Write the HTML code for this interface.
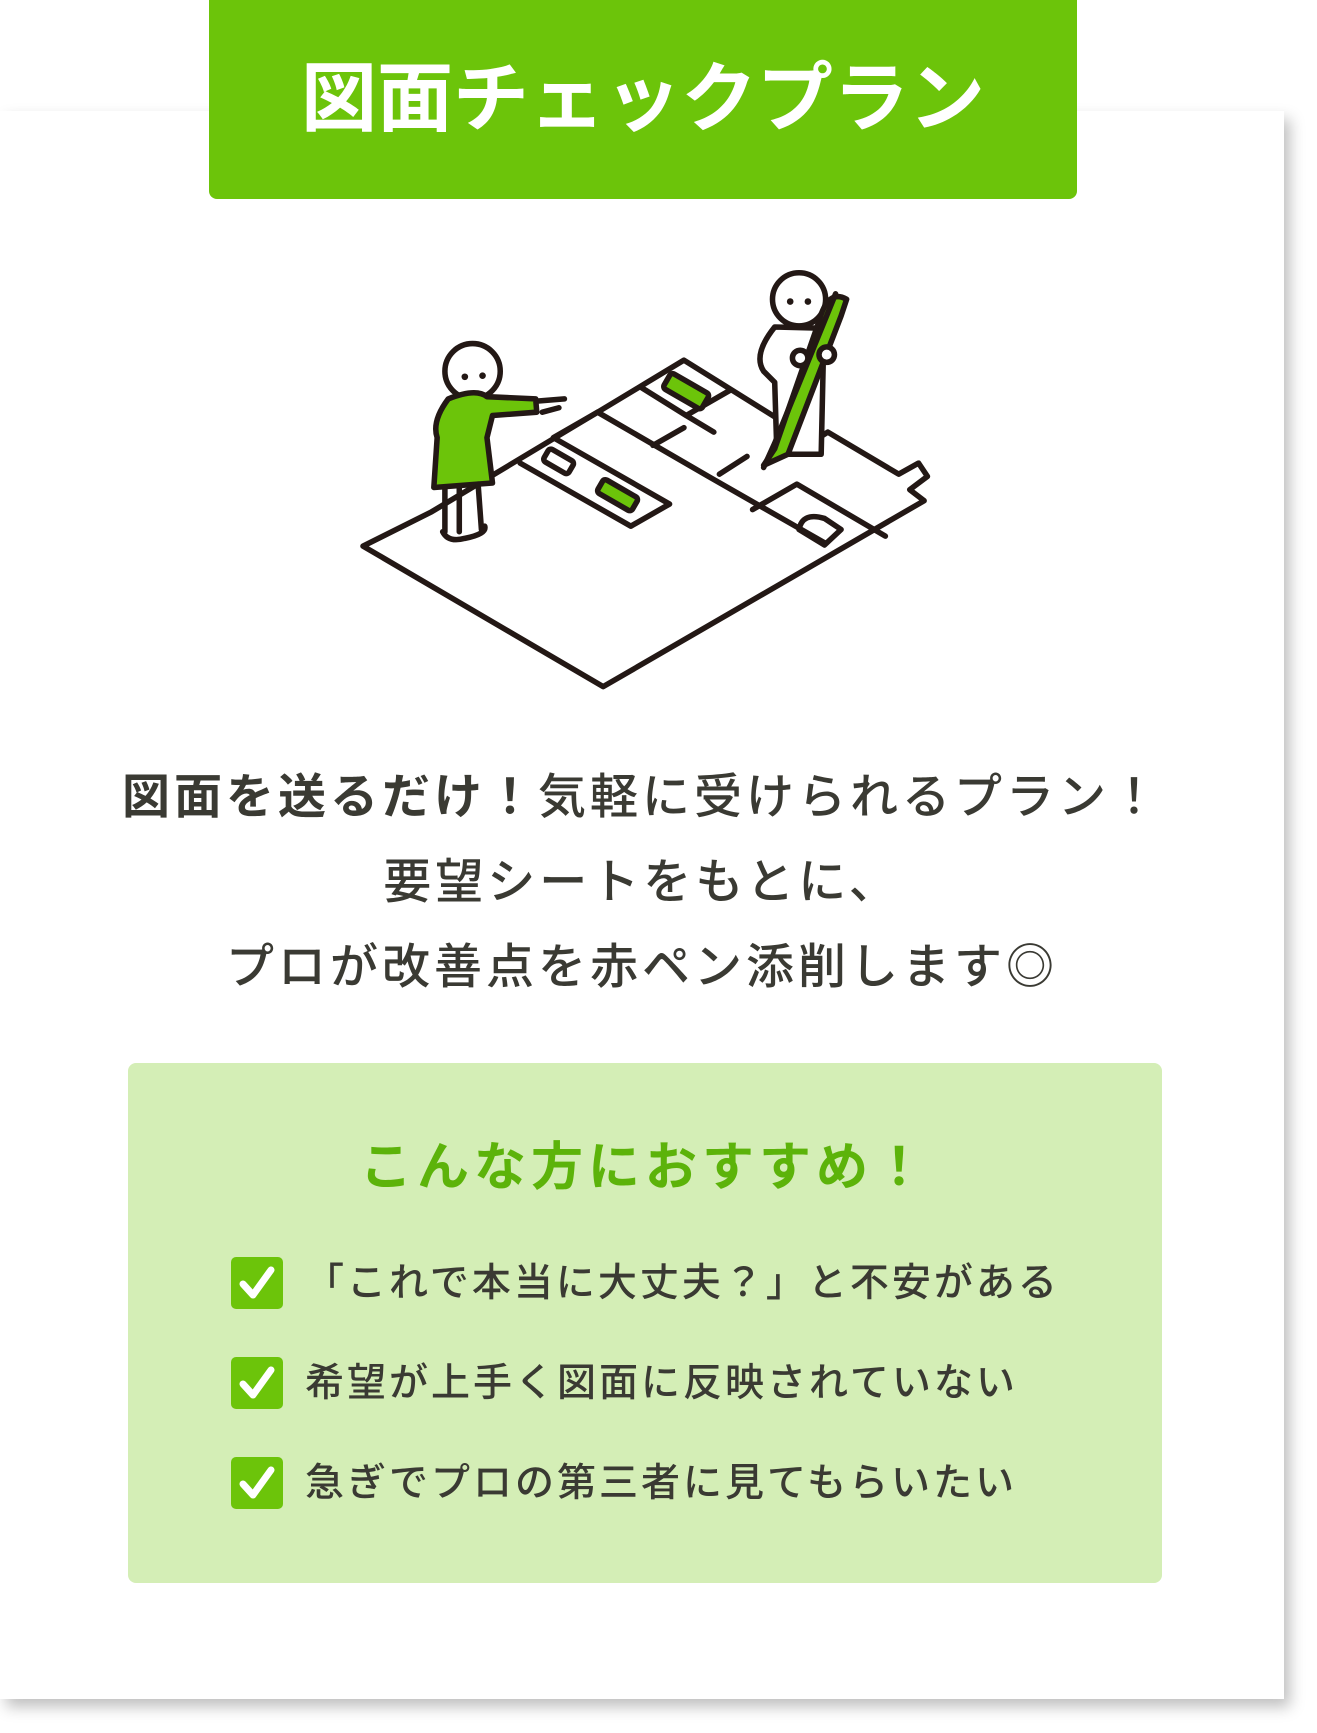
<!DOCTYPE html>
<html><head><meta charset="utf-8"><style>
body{margin:0;width:1317px;height:1733px;background:#fff;position:relative;overflow:hidden;font-family:"Liberation Sans","Noto Sans CJK JP",sans-serif;color:#3a3a33}
.card{position:absolute;left:0;top:111px;width:1284px;height:1588px;background:#fff;box-shadow:6px 8px 14px rgba(0,0,0,.25)}
.head{position:absolute;left:209px;top:0;width:868px;height:199px;background:#6cc40a;border-radius:0 0 8px 8px;color:#fff;font-weight:bold;font-size:76px;letter-spacing:0px;text-align:center;line-height:199px}
.lead{position:absolute;left:0;width:1284px;text-align:center;font-size:48px;letter-spacing:4px;top:755px;line-height:85px;font-weight:500}
.box{position:absolute;left:128px;top:1063px;width:1034px;height:520px;background:#d4eeb6;border-radius:8px}
.box h2{margin:0;position:absolute;top:70px;width:100%;text-align:center;color:#5cb30a;font-size:52px;letter-spacing:5px;font-weight:bold;line-height:70px}
.item{position:absolute;left:103px;height:53px;font-size:39px;letter-spacing:3px;line-height:53px;font-weight:500}
.item .cb{position:absolute;left:0;top:0;width:52px;height:52px;background:#6cc40a;border-radius:5px}
.item span{position:absolute;left:74px;white-space:nowrap}
</style></head><body>
<div class="card"></div>
<div class="head">図面チェックプラン</div>
<svg style="position:absolute;left:0;top:0" width="1317" height="1733" viewBox="0 0 1190 1565">
<g fill="none" stroke="#231815" stroke-width="5" stroke-linejoin="round" stroke-linecap="round">
<path d="M328,493 L545,620 L835,452 L822,442 L838,430 L830,418 L812,428 L748,390 L735,398 L618,325 L540,372 L460,420 L390,462 Z" fill="#fff"/>
<path d="M540,372 L500,395 L605,455 L570,475 L470,418"/>
<path d="M540,372 L640,430 M590,402 L618,386 M650,428 L675,412 M640,430 L745,490 M680,460 L720,437 L800,484 M580,350 L620,375 L660,352 M620,375 L645,390"/>
<rect x="600" y="345" width="40" height="16" rx="3" fill="#6cc40a" transform="rotate(30 620 353)"/>
<rect x="540" y="440" width="36" height="14" rx="3" fill="#6cc40a" transform="rotate(30 558 447)"/>
<rect x="492" y="410" width="26" height="13" rx="3" transform="rotate(30 505 416)"/>
<path d="M722,478 Q725,462 745,468 L760,478 L745,492 Z"/>
<circle cx="427" cy="335" r="25" fill="#fff"/>
<path d="M405,360 Q390,380 395,395 L392,440 L445,436 L440,395 L445,375 L485,372 L484,360 L440,358 Q430,350 405,360 Z" fill="#6cc40a"/>
<path d="M485,362 L510,360 M490,372 L505,368 M402,440 L402,480 M432,437 L435,478 M415,440 L415,480 M400,480 Q405,490 420,486 Q440,482 438,475"/>
<circle cx="722" cy="270" r="24" fill="#fff"/>
<path d="M700,295 Q680,320 690,335 L700,345 L702,410 L742,410 L744,320 L740,296 Z" fill="#fff"/>
<path d="M690,420 L700,405 L740,290 Q748,260 765,270 L760,285 L712,410 Z" fill="#6cc40a"/>
<path d="M755,265 L700,400 L690,422"/>
<circle cx="747" cy="320" r="7" fill="#fff"/><circle cx="723" cy="323" r="7" fill="#fff"/>
</g>
<g fill="#231815"><circle cx="420" cy="340" r="3"/><circle cx="436" cy="339" r="3"/><circle cx="714" cy="272" r="3"/><circle cx="730" cy="272" r="3"/></g>
</svg>
<div class="lead"><b>図面を送るだけ！</b>気軽に受けられるプラン！<br>要望シートをもとに、<br>プロが改善点を赤ペン添削します◎</div>
<div class="box"><h2>こんな方におすすめ！</h2>
<div class="item" style="top:194px"><div class="cb"><svg width="52" height="52"><path d="M12,27 L22,38 L40,13" fill="none" stroke="#fff" stroke-width="7" stroke-linecap="round" stroke-linejoin="round"/></svg></div><span>「これで本当に大丈夫？」と不安がある</span></div>
<div class="item" style="top:294px"><div class="cb"><svg width="52" height="52"><path d="M12,27 L22,38 L40,13" fill="none" stroke="#fff" stroke-width="7" stroke-linecap="round" stroke-linejoin="round"/></svg></div><span>希望が上手く図面に反映されていない</span></div>
<div class="item" style="top:394px"><div class="cb"><svg width="52" height="52"><path d="M12,27 L22,38 L40,13" fill="none" stroke="#fff" stroke-width="7" stroke-linecap="round" stroke-linejoin="round"/></svg></div><span>急ぎでプロの第三者に見てもらいたい</span></div>
</div>
</body></html>
